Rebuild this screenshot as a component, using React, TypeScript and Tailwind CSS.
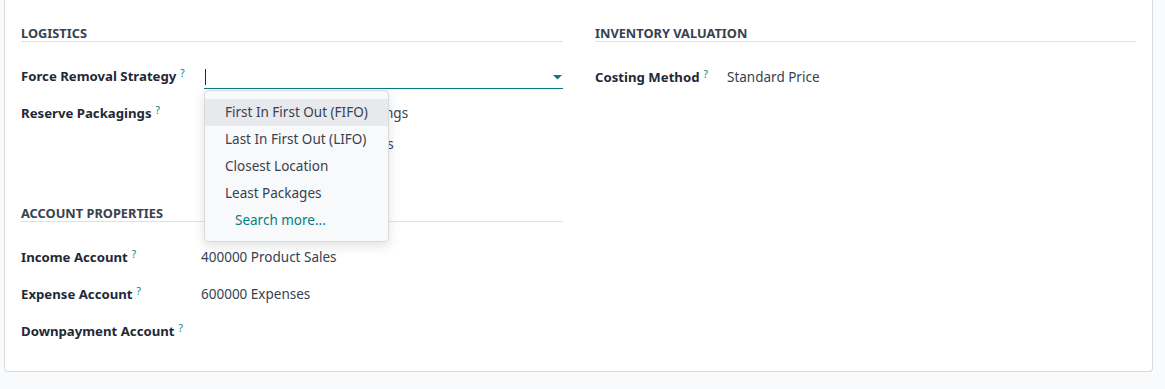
import React from 'react';

const font = { fontFamily: '"Noto Sans", Lato, sans-serif' };

const Tip = () => (
    <sup className="ml-[4px] text-[10px] font-normal text-[#017e84] relative -top-[4px]">?</sup>
);

const SectionTitle: React.FC<{ title: string }> = ({ title }) => (
    <div className="border-b border-[#dee2e6] h-[17px] text-[12.8px] font-bold text-[#374151] uppercase leading-[16px]">
        {title}
    </div>
);

const Row: React.FC<{ label: string; labelW: string; children?: React.ReactNode }> = ({ label, labelW, children }) => (
    <div className="flex items-center h-[37px]">
        <div className={`${labelW} shrink-0 text-[13.2px] font-bold text-[#1f2937] leading-[21px]`}>
            {label}
            <Tip />
        </div>
        <div className="flex-1 text-[13.5px] text-[#374151] leading-[21px]">{children}</div>
    </div>
);

const options = ['First In First Out (FIFO)', 'Last In First Out (LIFO)', 'Closest Location', 'Least Packages'];

export default function App() {
    return (
        <div className="w-full h-[389px] bg-[#f9fafb] pl-[4px] pr-[12px]" style={font}>
            <div className="h-[372px] bg-white border-x border-b border-[#d8dadd] rounded-b-[4px] pt-[25px] pl-[16px] pr-[16px] flex gap-[32px]">
                {/* left column */}
                <div className="w-[542px] shrink-0">
                    <SectionTitle title="Logistics" />
                    <div className="mt-[16px]">
                        <div className="flex items-center h-[37px]">
                            <div className="w-[183px] shrink-0 text-[13.2px] font-bold text-[#1f2937] leading-[21px]">
                                Force Removal Strategy
                                <Tip />
                            </div>
                            <div className="flex-1 relative">
                                <div className="h-[25px] border-b border-[#017e84] flex items-center justify-between">
                                    <span className="ml-[1px] w-px h-[16px] bg-[#1f2937] mt-[1px]" />
                                    <svg width="9" height="5" viewBox="0 0 9 5" className="mr-[1px] mt-[3px]">
                                        <path d="M0 0 L9 0 L4.5 4.5 Z" fill="#1a6f78" />
                                    </svg>
                                </div>
                                {/* dropdown */}
                                <div className="absolute z-10 left-0 top-[26px] w-[185px] bg-[#f8f9fa] border border-[#d8dadd] rounded-[4px] shadow-[0_4px_12px_rgba(0,0,0,0.12)] pt-[8px] pb-[7px]">
                                    {options.map((o, i) => (
                                        <div
                                            key={o}
                                            className={`h-[27px] pl-[20px] flex items-center text-[13.5px] text-[#374151] ${i === 0 ? 'bg-[#e7e9ed]' : ''}`}
                                        >
                                            {o}
                                        </div>
                                    ))}
                                    <div className="h-[27px] pl-[30px] flex items-center text-[13.5px] text-[#017e84]">
                                        Search more...
                                    </div>
                                </div>
                            </div>
                        </div>
                        <div className="flex items-start pt-[8px] pb-[8px]">
                            <div className="w-[183px] shrink-0 text-[13.2px] font-bold text-[#1f2937] leading-[21px]">
                                Reserve Packagings
                                <Tip />
                            </div>
                            <div className="flex flex-col gap-[10px] text-[13.5px] text-[#374151] leading-[21px]">
                                <label className="flex items-center gap-[6px]">
                                    <span className="w-[14px] h-[14px] rounded-full border border-[#adb5bd]" />
                                    Reserve Only Full Packagings
                                </label>
                                <label className="flex items-center gap-[6px]">
                                    <span className="w-[14px] h-[14px] rounded-full border border-[#adb5bd]" />
                                    Reserve Partial Packagings
                                </label>
                            </div>
                        </div>
                    </div>

                    <div className="mt-[42px]">
                        <SectionTitle title="Account Properties" />
                        <div className="mt-[17px]">
                            <Row label="Income Account" labelW="w-[180px]">400000 Product Sales</Row>
                            <Row label="Expense Account" labelW="w-[180px]">600000 Expenses</Row>
                            <Row label="Downpayment Account" labelW="w-[180px]" />
                        </div>
                    </div>
                </div>

                {/* right column */}
                <div className="w-[541px] shrink-0">
                    <SectionTitle title="Inventory Valuation" />
                    <div className="mt-[17px]">
                        <Row label="Costing Method" labelW="w-[132px]">Standard Price</Row>
                    </div>
                </div>
            </div>
        </div>
    );
}
